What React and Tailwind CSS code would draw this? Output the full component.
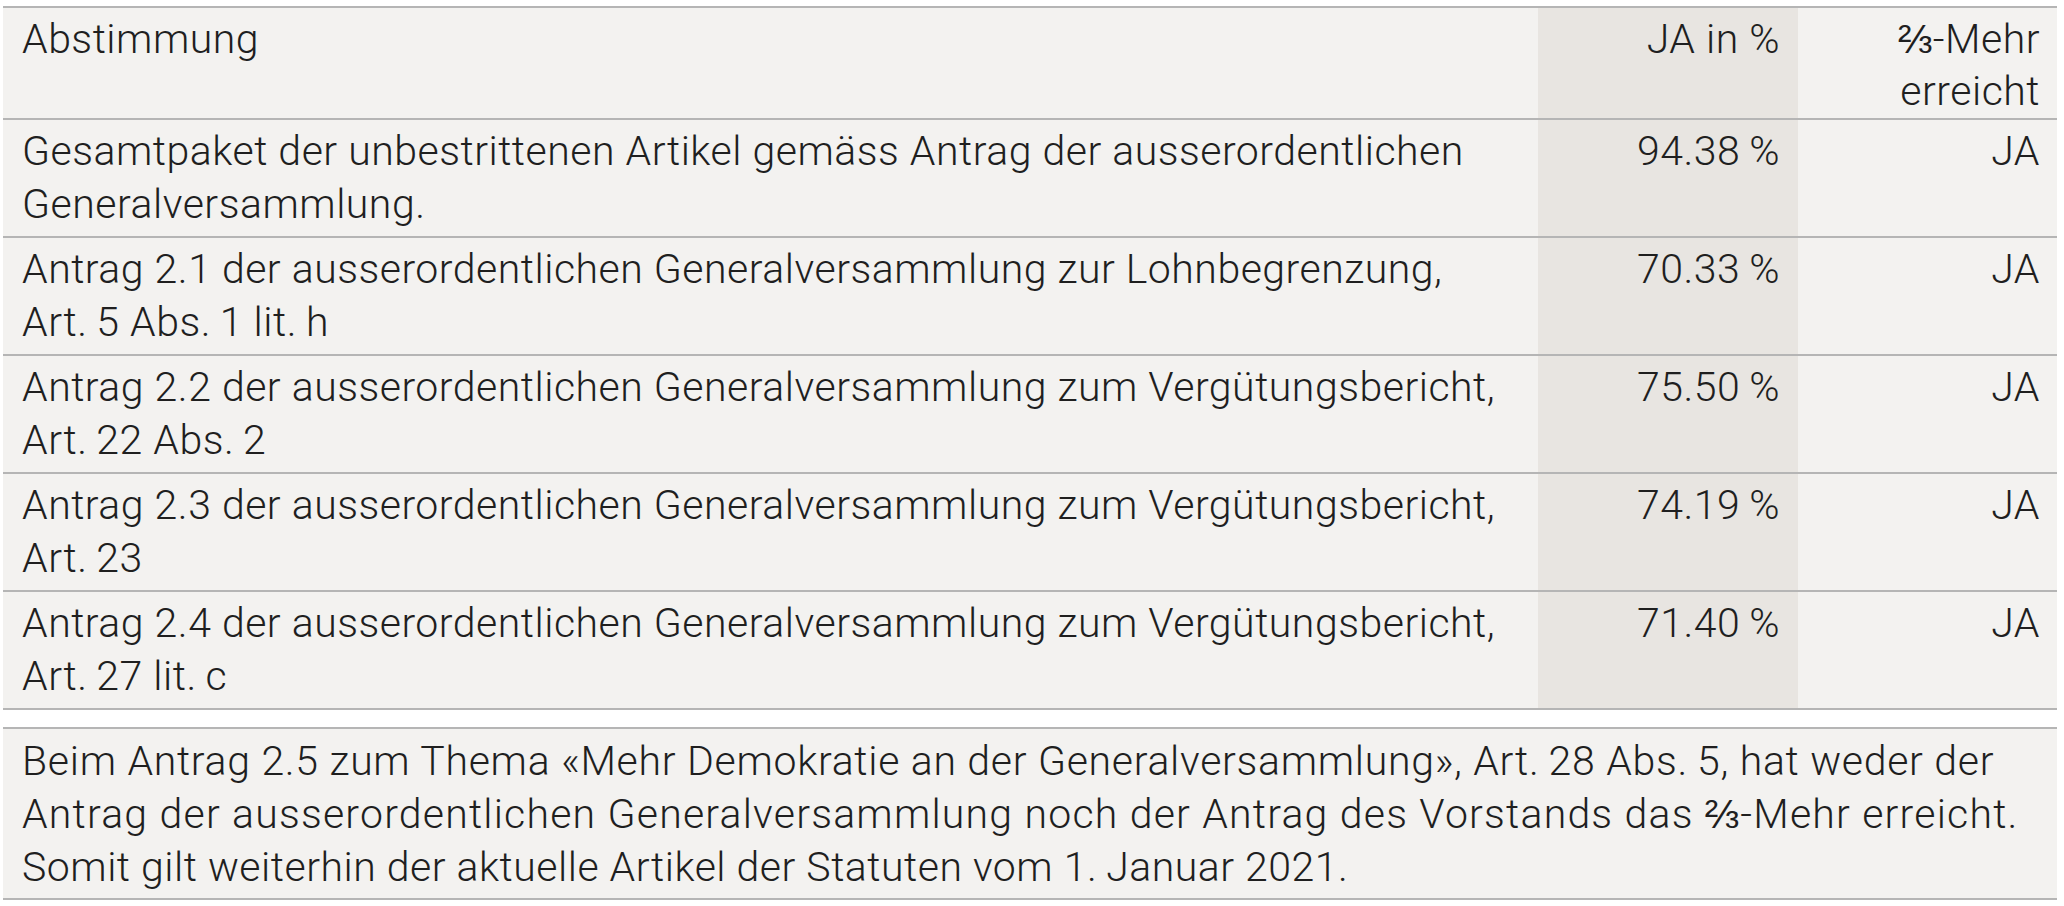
import React from "react";

const T = "\u2009";

const rows = [
  {
    label: ["Gesamtpaket der unbestrittenen Artikel gemäss Antrag der ausserordentlichen", "Generalversammlung."],
    pct: `94.38${T}%`,
  },
  {
    label: ["Antrag 2.1 der ausserordentlichen Generalversammlung zur Lohnbegrenzung,", `Art.${T}5 Abs.${T}1 lit.${T}h`],
    pct: `70.33${T}%`,
  },
  {
    label: ["Antrag 2.2 der ausserordentlichen Generalversammlung zum Vergütungsbericht,", `Art.${T}22 Abs.${T}2`],
    pct: `75.50${T}%`,
  },
  {
    label: ["Antrag 2.3 der ausserordentlichen Generalversammlung zum Vergütungsbericht,", `Art.${T}23`],
    pct: `74.19${T}%`,
  },
  {
    label: ["Antrag 2.4 der ausserordentlichen Generalversammlung zum Vergütungsbericht,", `Art.${T}27 lit.${T}c`],
    pct: `71.40${T}%`,
  },
];

export default function App() {
  return (
    <div
      className="w-[2064px] h-[906px] bg-white pt-[6px] pl-[3px] text-[41px] leading-[53px] tracking-[0.5px] text-[#1f1f1f] font-light"
      style={{ fontFamily: "Roboto, 'Liberation Sans', sans-serif" }}
    >
      <div className="w-[2054px] bg-[#f3f2f0] border-b-2 border-[#b5b5b5]">
        <div className="grid grid-cols-[1535px_260px_1fr] border-t-2 border-[#b5b5b5] leading-[52px]">
          <div className="pl-[19px] pt-[5px] pb-[1px]">Abstimmung</div>
          <div className="bg-[#e8e5e1] text-right pr-[18px] pt-[5px] pb-[1px]">JA in %</div>
          <div className="text-right pr-[17px] pt-[5px] pb-[1px]">
            ⅔-Mehr
            <br />
            erreicht
          </div>
        </div>
        {rows.map((r, i) => (
          <div key={i} className="grid grid-cols-[1535px_260px_1fr] border-t-2 border-[#b5b5b5]">
            <div className="pl-[19px] pt-[5px] pb-[5px]">
              {r.label[0]}
              <br />
              {r.label[1]}
            </div>
            <div className="bg-[#e8e5e1] text-right pr-[18px] pt-[5px] pb-[5px]">{r.pct}</div>
            <div className="text-right pr-[17px] pt-[5px] pb-[5px]">JA</div>
          </div>
        ))}
      </div>
      <div className="mt-[17px] w-[2054px] bg-[#f3f2f0] border-y-2 border-[#b5b5b5] pl-[19px] pt-[6px] pb-[4px]">
        <div className="tracking-[0.7px]">
          Beim Antrag 2.5 zum Thema «Mehr Demokratie an der Generalversammlung», Art.{T}28 Abs.{T}5, hat weder der
        </div>
        <div className="tracking-[1.2px]">
          Antrag der ausserordentlichen Generalversammlung noch der Antrag des Vorstands das ⅔-Mehr erreicht.
        </div>
        <div>Somit gilt weiterhin der aktuelle Artikel der Statuten vom 1.{T}Januar 2021.</div>
      </div>
    </div>
  );
}
